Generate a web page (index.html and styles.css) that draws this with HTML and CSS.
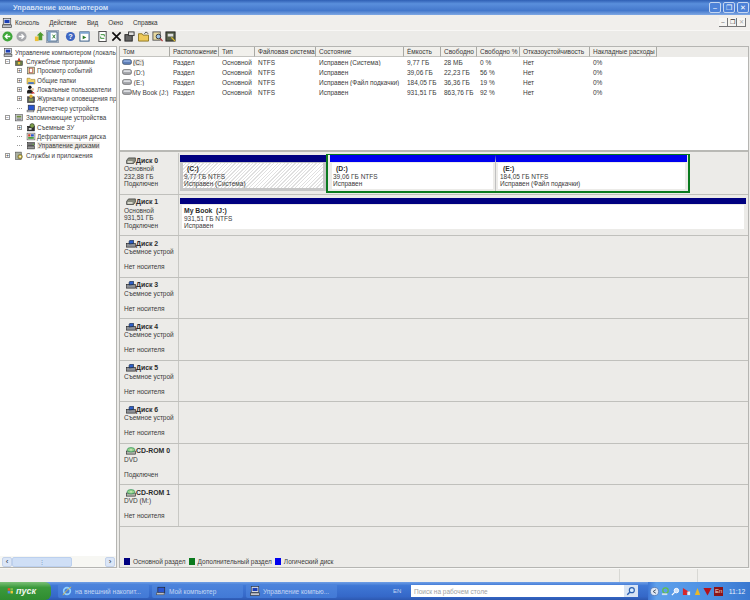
FILE: index.html
```html
<!DOCTYPE html>
<html lang="ru">
<head>
    <meta charset="UTF-8">
    <title>Управление компьютером</title>
    <link rel="stylesheet" href="styles.css">
</head>
<body>

<svg class="defs" width="0" height="0">
    <symbol id="i-pc" viewBox="0 0 16 16"><rect x="2" y="1" width="12" height="9" fill="#dfe3ea" stroke="#333"/><rect x="4" y="3" width="8" height="5" fill="#1c3fb5"/><rect x="1" y="11" width="14" height="4" fill="#c3c6cc" stroke="#333"/></symbol>
    <symbol id="i-tools" viewBox="0 0 16 16"><rect x="2" y="7" width="12" height="8" fill="#6a7a4a" stroke="#333"/><path d="M5 7 L8 1 L11 7z" fill="#c8372a"/><rect x="6" y="9" width="4" height="4" fill="#e8c23a"/></symbol>
    <symbol id="i-log" viewBox="0 0 16 16"><rect x="2" y="2" width="12" height="12" fill="#d9c78f" stroke="#444"/><rect x="5" y="4" width="6" height="8" fill="#fff" stroke="#a33"/></symbol>
    <symbol id="i-folder" viewBox="0 0 16 16"><path d="M1 4 H6 L8 6 H15 V14 H1z" fill="#f1d264" stroke="#9a7d20"/><rect x="3" y="11" width="10" height="3" fill="#3a6ecf"/></symbol>
    <symbol id="i-users" viewBox="0 0 16 16"><circle cx="6" cy="4" r="3" fill="#111"/><path d="M1 15 V10 Q6 6 11 10 V15z" fill="#222"/><circle cx="11" cy="8" r="2.5" fill="#e9c9a0"/><path d="M8 15 Q11 9 15 15z" fill="#c33"/></symbol>
    <symbol id="i-alert" viewBox="0 0 16 16"><rect x="2" y="5" width="12" height="10" fill="#555" stroke="#222"/><circle cx="8" cy="4" r="3" fill="#e0b030"/><rect x="4" y="8" width="8" height="5" fill="#8a9a5a"/></symbol>
    <symbol id="i-screen" viewBox="0 0 16 16"><rect x="3" y="2" width="11" height="9" fill="#2a55d0" stroke="#222"/><rect x="1" y="11" width="12" height="3" fill="#d5d8df" stroke="#555"/></symbol>
    <symbol id="i-store" viewBox="0 0 16 16"><rect x="2" y="3" width="12" height="11" fill="#c9cbd0" stroke="#444"/><rect x="4" y="5" width="8" height="3" fill="#6f8f3c"/><rect x="4" y="10" width="8" height="2" fill="#777"/></symbol>
    <symbol id="i-removable" viewBox="0 0 16 16"><rect x="2" y="6" width="12" height="8" fill="#333" stroke="#111"/><circle cx="10" cy="5" r="4" fill="#7ea04a" stroke="#222"/><rect x="4" y="9" width="5" height="3" fill="#ddd"/></symbol>
    <symbol id="i-defrag" viewBox="0 0 16 16"><rect x="1" y="2" width="14" height="12" fill="#e8e4d8" stroke="#555"/><rect x="3" y="4" width="4" height="4" fill="#d03a2a"/><rect x="8" y="4" width="5" height="4" fill="#2a55d0"/><rect x="3" y="9" width="10" height="3" fill="#3a9a3a"/></symbol>
    <symbol id="i-manage" viewBox="0 0 16 16"><rect x="2" y="3" width="12" height="5" fill="#777" stroke="#222"/><rect x="2" y="9" width="12" height="5" fill="#999" stroke="#222"/><circle cx="12" cy="6" r="1" fill="#6c3"/></symbol>
    <symbol id="i-services" viewBox="0 0 16 16"><rect x="2" y="2" width="10" height="13" fill="#aab0a0" stroke="#444"/><circle cx="10" cy="10" r="4" fill="#c9b23a" stroke="#554"/><circle cx="10" cy="10" r="1.5" fill="#fff"/></symbol>
    <symbol id="i-vol" viewBox="0 0 16 10"><rect x="0.5" y="1" width="15" height="8" rx="3" fill="#a6a8ad" stroke="#555"/><rect x="2" y="2" width="12" height="3" rx="1.5" fill="#dcdee2"/></symbol>
    <symbol id="i-vol-sel" viewBox="0 0 16 10"><rect x="0.5" y="1" width="15" height="8" rx="3" fill="#5f7fb8" stroke="#345"/><rect x="2" y="2" width="12" height="3" rx="1.5" fill="#8ba8da"/></symbol>
    <symbol id="i-disk" viewBox="0 0 16 12"><path d="M4 1 H15 V6 L12 10 H1 V5z" fill="#8a8d80" stroke="#222"/><rect x="2.5" y="6" width="8" height="3" fill="#d8d8cc"/></symbol>
    <symbol id="i-usb" viewBox="0 0 16 12"><rect x="1" y="5" width="14" height="6" fill="#8d9096" stroke="#222"/><path d="M5 6 V2 Q5 0 8 0 H12 V5z" fill="#2f5fc8" stroke="#123"/></symbol>
    <symbol id="i-cd" viewBox="0 0 16 12"><rect x="1" y="6" width="14" height="5" fill="#b0b3aa" stroke="#222"/><ellipse cx="8" cy="4" rx="6" ry="3.5" fill="#9ad38c" stroke="#285"/><circle cx="8" cy="4" r="1" fill="#fff"/></symbol>
</svg>

<header class="titlebar">
    <span class="title">Управление компьютером</span>
    <div class="window-buttons">
        <span class="win-btn">&#8211;</span>
        <span class="win-btn">&#10064;</span>
        <span class="win-btn win-close">&#10005;</span>
    </div>
</header>

<nav class="menubar">
    <svg class="menu-icon"><use href="#i-pc"/></svg>
    <span>Консоль</span>
    <span>Действие</span>
    <span>Вид</span>
    <span>Окно</span>
    <span>Справка</span>
    <div class="child-buttons">
        <span class="child-btn">&#8211;</span>
        <span class="child-btn">&#10064;</span>
        <span class="child-btn child-off">&#10005;</span>
    </div>
</nav>

<div class="toolbar">
    <svg class="tool" viewBox="0 0 12 12"><circle cx="6" cy="6" r="5.5" fill="#3fa63a"/><path d="M9 6 H4 M6 3.5 L3.5 6 L6 8.5" stroke="#fff" stroke-width="1.4" fill="none"/></svg>
    <svg class="tool" viewBox="0 0 12 12"><circle cx="6" cy="6" r="5.5" fill="#a6a8ac"/><path d="M3 6 H8 M6 3.5 L8.5 6 L6 8.5" stroke="#fff" stroke-width="1.4" fill="none"/></svg>
    <i class="tool-sep"></i>
    <svg class="tool" viewBox="0 0 12 12"><path d="M1 6 H5 V11 H1z" fill="#eebf3a"/><path d="M7 1 L11 5 H9 V10 H5 V5 H3z" fill="#4e9a2e"/></svg>
    <svg class="tool tool-on" viewBox="0 0 12 12"><rect x="1" y="1" width="10" height="10" fill="#fff" stroke="#28507e"/><rect x="1" y="1" width="3" height="10" fill="#7ea5d0"/><path d="M6 4 L9 8 M9 4 L6 8" stroke="#2a7a2a"/></svg>
    <i class="tool-sep"></i>
    <svg class="tool" viewBox="0 0 12 12"><circle cx="6" cy="6" r="5" fill="#3d66c2"/><text x="6" y="9" font-size="8" font-family="Liberation Sans" font-weight="700" fill="#fff" text-anchor="middle">?</text></svg>
    <svg class="tool" viewBox="0 0 12 12"><rect x="1" y="1" width="10" height="10" fill="#fff" stroke="#28507e"/><rect x="1" y="1" width="10" height="2" fill="#7ea5d0"/><path d="M4 5 L8 7 L4 9z" fill="#2a7a2a"/></svg>
    <i class="tool-sep"></i>
    <svg class="tool" viewBox="0 0 12 12"><rect x="2" y="0.5" width="8" height="11" fill="#fff" stroke="#444"/><path d="M4 4 H8 V6 M8 8 H4 V6" stroke="#2a8a2a" fill="none"/></svg>
    <svg class="tool" viewBox="0 0 12 12"><path d="M1.5 1.5 L10.5 10.5 M10.5 1.5 L1.5 10.5" stroke="#111" stroke-width="1.8"/></svg>
    <svg class="tool" viewBox="0 0 12 12"><rect x="1" y="4" width="8" height="7" fill="#666" stroke="#222"/><rect x="5" y="1" width="6" height="4" fill="#ddd" stroke="#333"/></svg>
    <svg class="tool" viewBox="0 0 12 12"><path d="M0.5 3 H4.5 L5.5 4.5 H11.5 V11 H0.5z" fill="#eec95a" stroke="#8a7320"/><path d="M7 3 L9 1 L11 3" stroke="#333" fill="none"/></svg>
    <svg class="tool" viewBox="0 0 12 12"><rect x="1" y="1" width="8" height="9" fill="#e7d9a0" stroke="#555"/><circle cx="7" cy="6" r="2.5" fill="#9cc4e8" stroke="#333"/><path d="M9 8 L11.5 11" stroke="#a33" stroke-width="1.4"/></svg>
    <svg class="tool" viewBox="0 0 12 12"><rect x="1" y="1" width="10" height="10" fill="#56604a" stroke="#222"/><rect x="3" y="3" width="6" height="3" fill="#ddd"/><path d="M7 7 L11 11" stroke="#e0c030" stroke-width="1.4"/></svg>
</div>

<main class="workspace">
    <aside class="tree-pane">
        <ul class="tree">
            <li class="lv0"><svg class="ico"><use href="#i-pc"/></svg>Управление компьютером (локаль</li>
            <li class="lv1"><b class="box">&minus;</b><svg class="ico"><use href="#i-tools"/></svg>Служебные программы</li>
            <li class="lv2"><b class="box">+</b><svg class="ico"><use href="#i-log"/></svg>Просмотр событий</li>
            <li class="lv2"><b class="box">+</b><svg class="ico"><use href="#i-folder"/></svg>Общие папки</li>
            <li class="lv2"><b class="box">+</b><svg class="ico"><use href="#i-users"/></svg>Локальные пользователи</li>
            <li class="lv2"><b class="box">+</b><svg class="ico"><use href="#i-alert"/></svg>Журналы и оповещения пр</li>
            <li class="lv2"><b class="box box-none"></b><svg class="ico"><use href="#i-screen"/></svg>Диспетчер устройств</li>
            <li class="lv1"><b class="box">&minus;</b><svg class="ico"><use href="#i-store"/></svg>Запоминающие устройства</li>
            <li class="lv2"><b class="box">+</b><svg class="ico"><use href="#i-removable"/></svg>Съемные ЗУ</li>
            <li class="lv2"><b class="box box-none"></b><svg class="ico"><use href="#i-defrag"/></svg>Дефрагментация диска</li>
            <li class="lv2"><b class="box box-none"></b><svg class="ico"><use href="#i-manage"/></svg><span class="selected">Управление дисками</span></li>
            <li class="lv1"><b class="box">+</b><svg class="ico"><use href="#i-services"/></svg>Службы и приложения</li>
        </ul>
        <div class="hscroll">
            <span class="scroll-btn">&#8249;</span>
            <span class="scroll-thumb">&#8942;</span>
            <span class="scroll-fill"></span>
            <span class="scroll-btn">&#8250;</span>
        </div>
    </aside>

    <section class="detail-pane">
        <div class="volume-list">
            <div class="vrow vhead">
                <span>Том</span><span>Расположение</span><span>Тип</span><span>Файловая система</span><span>Состояние</span><span>Ёмкость</span><span>Свободно</span><span>Свободно %</span><span>Отказоустойчивость</span><span>Накладные расходы</span>
            </div>
            <div class="vrow">
                <span><svg class="vol"><use href="#i-vol-sel"/></svg><em class="vol-name">(C:)</em></span><span>Раздел</span><span>Основной</span><span>NTFS</span><span>Исправен (Система)</span><span>9,77 ГБ</span><span>28 МБ</span><span>0 %</span><span>Нет</span><span>0%</span>
            </div>
            <div class="vrow">
                <span><svg class="vol"><use href="#i-vol"/></svg>&nbsp;(D:)</span><span>Раздел</span><span>Основной</span><span>NTFS</span><span>Исправен</span><span>39,06 ГБ</span><span>22,23 ГБ</span><span>56 %</span><span>Нет</span><span>0%</span>
            </div>
            <div class="vrow">
                <span><svg class="vol"><use href="#i-vol"/></svg>&nbsp;(E:)</span><span>Раздел</span><span>Основной</span><span>NTFS</span><span>Исправен (Файл подкачки)</span><span>184,05 ГБ</span><span>36,36 ГБ</span><span>19 %</span><span>Нет</span><span>0%</span>
            </div>
            <div class="vrow">
                <span><svg class="vol"><use href="#i-vol"/></svg>My Book (J:)</span><span>Раздел</span><span>Основной</span><span>NTFS</span><span>Исправен</span><span>931,51 ГБ</span><span>863,76 ГБ</span><span>92 %</span><span>Нет</span><span>0%</span>
            </div>
        </div>

        <div class="disk-view">
            <div class="disk">
                <div class="disk-label">
                    <strong><svg class="dico"><use href="#i-disk"/></svg>Диск 0</strong>
                    <span>Основной</span><span>232,88 ГБ</span><span>Подключен</span>
                </div>
                <div class="disk-map map-0">
                    <div class="part part-primary part-system">
                        <div class="part-body"><strong>(C:)</strong><span>9,77 ГБ NTFS</span><span>Исправен (Система)</span></div>
                    </div>
                    <div class="extended">
                        <div class="part part-logical part-d">
                            <div class="part-body"><strong>(D:)</strong><span>39,06 ГБ NTFS</span><span>Исправен</span></div>
                        </div>
                        <div class="part part-logical part-e">
                            <div class="part-body"><strong>(E:)</strong><span>184,05 ГБ NTFS</span><span>Исправен (Файл подкачки)</span></div>
                        </div>
                    </div>
                </div>
            </div>
            <div class="disk">
                <div class="disk-label">
                    <strong><svg class="dico"><use href="#i-disk"/></svg>Диск 1</strong>
                    <span>Основной</span><span>931,51 ГБ</span><span>Подключен</span>
                </div>
                <div class="disk-map map-1">
                    <div class="part part-primary part-full">
                        <div class="part-body"><strong>My Book&nbsp; (J:)</strong><span>931,51 ГБ NTFS</span><span>Исправен</span></div>
                    </div>
                </div>
            </div>
            <div class="disk"><div class="disk-label"><strong><svg class="dico"><use href="#i-usb"/></svg>Диск 2</strong><span>Съемное устрой</span><span>&nbsp;</span><span>Нет носителя</span></div><div class="disk-map"></div></div>
            <div class="disk"><div class="disk-label"><strong><svg class="dico"><use href="#i-usb"/></svg>Диск 3</strong><span>Съемное устрой</span><span>&nbsp;</span><span>Нет носителя</span></div><div class="disk-map"></div></div>
            <div class="disk"><div class="disk-label"><strong><svg class="dico"><use href="#i-usb"/></svg>Диск 4</strong><span>Съемное устрой</span><span>&nbsp;</span><span>Нет носителя</span></div><div class="disk-map"></div></div>
            <div class="disk"><div class="disk-label"><strong><svg class="dico"><use href="#i-usb"/></svg>Диск 5</strong><span>Съемное устрой</span><span>&nbsp;</span><span>Нет носителя</span></div><div class="disk-map"></div></div>
            <div class="disk"><div class="disk-label"><strong><svg class="dico"><use href="#i-usb"/></svg>Диск 6</strong><span>Съемное устрой</span><span>&nbsp;</span><span>Нет носителя</span></div><div class="disk-map"></div></div>
            <div class="disk"><div class="disk-label"><strong><svg class="dico"><use href="#i-cd"/></svg>CD-ROM 0</strong><span>DVD</span><span>&nbsp;</span><span>Подключен</span></div><div class="disk-map"></div></div>
            <div class="disk"><div class="disk-label"><strong><svg class="dico"><use href="#i-cd"/></svg>CD-ROM 1</strong><span>DVD (M:)</span><span>&nbsp;</span><span>Нет носителя</span></div><div class="disk-map"></div></div>
        </div>

        <div class="legend">
            <i class="swatch sw-primary"></i><span>Основной раздел</span>
            <i class="swatch sw-extended"></i><span>Дополнительный раздел</span>
            <i class="swatch sw-logical"></i><span>Логический диск</span>
        </div>
    </section>
</main>

<div class="statusbar">
    <span class="status-main"></span>
    <span class="status-mid"></span>
    <span class="status-end"></span>
</div>

<footer class="taskbar">
    <div class="start"><svg class="flag" viewBox="0 0 10 10"><rect x="1" y="1" width="3.5" height="3.5" fill="#e8562a"/><rect x="5" y="1" width="3.5" height="3.5" fill="#7fc04a"/><rect x="1" y="5" width="3.5" height="3.5" fill="#4a90e0"/><rect x="5" y="5" width="3.5" height="3.5" fill="#f2c83a"/></svg>пуск</div>
    <div class="task"><svg class="task-ico" viewBox="0 0 12 12"><circle cx="6" cy="6" r="4" fill="none" stroke="#8fd0ff" stroke-width="2"/><path d="M1 11 Q5 5 11 1" stroke="#e8c23a" fill="none"/></svg>на внешний накопит...</div>
    <div class="task"><svg class="task-ico"><use href="#i-screen"/></svg>Мой компьютер</div>
    <div class="task"><svg class="task-ico"><use href="#i-pc"/></svg>Управление компью...</div>
    <span class="lang">EN</span>
    <div class="search">
        <span>Поиск на рабочем столе</span>
        <svg class="search-ico" viewBox="0 0 12 12"><circle cx="7" cy="5" r="3" fill="#d8ecff" stroke="#2a5fb0" stroke-width="1.4"/><path d="M4.5 7.5 L1.5 10.5" stroke="#2a5fb0" stroke-width="1.8"/></svg>
    </div>
    <div class="tray">
        <svg class="tray-ico" viewBox="0 0 10 10"><circle cx="5" cy="5" r="4.5" fill="#dfe8f5" stroke="#5a7fb8"/><path d="M6.5 3 L3.5 5 L6.5 7" stroke="#345" fill="none"/></svg>
        <svg class="tray-ico" viewBox="0 0 10 10"><circle cx="5" cy="4" r="3" fill="none" stroke="#5fc04a" stroke-width="1.4"/><rect x="1" y="7" width="6" height="2" fill="#cde"/></svg>
        <svg class="tray-ico" viewBox="0 0 10 10"><circle cx="6" cy="4" r="2.5" fill="#cfe2f8" stroke="#fff"/><path d="M4 6 L1 9" stroke="#fff" stroke-width="1.4"/></svg>
        <svg class="tray-ico" viewBox="0 0 10 10"><path d="M1 1 L9 6 L5 6 L6 9 L1 9z" fill="#d8262a"/><rect x="6" y="5" width="3" height="4" fill="#eee"/></svg>
        <svg class="tray-ico" viewBox="0 0 10 10"><path d="M5 1 L8 9 H2z" fill="#e8b82a"/></svg>
        <svg class="tray-ico" viewBox="0 0 10 10"><path d="M0.5 1 H9.5 L5 9.5z" fill="#b5121b"/></svg>
        <span class="tray-en">En</span>
        <span class="clock">11:12</span>
    </div>
</footer>

</body>
</html>
```

FILE: styles.css
```css
* {
    box-sizing: border-box;
}

html, body {
    margin: 0;
    padding: 0;
    height: 600px;
    overflow: hidden;
}

body {
    width: 750px;
    display: flex;
    flex-direction: column;
    background-color: #ecebe8;
    font-family: "Liberation Sans", Arial, sans-serif;
    font-size: 6.5px;
    color: #3a3a3a;
}

.defs {
    position: absolute;
}

/* Заголовок окна */
.titlebar {
    height: 15px;
    flex: none;
    display: flex;
    align-items: center;
    justify-content: space-between;
    padding: 0 1px 0 13px;
    background: linear-gradient(#2f5fb4, #5a8fdc 25%, #4478cc 70%, #7fa8e4);
    color: #d3e0f6;
}

.title {
    font-size: 7.3px;
    font-weight: 700;
}

.window-buttons {
    display: flex;
    gap: 2px;
}

.win-btn {
    width: 12px;
    height: 11px;
    display: flex;
    align-items: center;
    justify-content: center;
    border: 1px solid #c5d6f0;
    border-radius: 2px;
    background-color: #4d82d8;
    color: #fff;
    font-size: 7px;
}

.menubar {
    height: 15px;
    flex: none;
    display: flex;
    align-items: center;
    gap: 10px;
    padding: 0 4px 0 2px;
    background-color: #f1efec;
    color: #333;
    font-size: 6.3px;
}

.menu-icon {
    width: 10px;
    height: 10px;
    margin-right: -7px;
}

.child-buttons {
    margin-left: auto;
    display: flex;
    gap: 0;
}

.child-btn {
    width: 9px;
    height: 9px;
    display: flex;
    align-items: center;
    justify-content: center;
    background-color: #f6f5f2;
    border-right: 1px solid #777;
    border-bottom: 1px solid #777;
    font-size: 6px;
    line-height: 1;
}

.child-off {
    color: #aaa;
}

.toolbar {
    height: 14px;
    flex: none;
    display: flex;
    align-items: center;
    gap: 2.7px;
    padding: 0 0 2px 2px;
    border-top: 1px solid #f8f7f5;
    background-color: #ecebe8;
}

.tool {
    width: 11px;
    height: 11px;
    flex: none;
}

.tool-on {
    background-color: #dcdcd6;
    outline: 1px solid #9aa6b8;
}

.tool-sep {
    width: 1.6px;
    flex: none;
}

/* Дерево */
.workspace {
    height: 524px;
    flex: none;
    display: flex;
    gap: 2px;
    padding: 2px 1px 0 0;
    background-color: #ecebe8;
}

.tree-pane {
    width: 117px;
    flex: none;
    display: flex;
    flex-direction: column;
    background-color: #fff;
    border: 1px solid #b5b5b2;
    border-left: none;
    overflow: hidden;
}

.tree {
    flex: 1;
    list-style: none;
    margin: 0;
    padding: 0.5px 0 0 3px;
    font-size: 6.3px;
    white-space: nowrap;
    overflow: hidden;
}

.tree li {
    height: 9.36px;
    display: flex;
    align-items: center;
    color: #3c3c3c;
}

.lv1 {
    padding-left: 2px;
}

.lv2 {
    padding-left: 14px;
}

.box {
    width: 5px;
    height: 5px;
    flex: none;
    display: flex;
    align-items: center;
    justify-content: center;
    margin-right: 4px;
    border: 1px solid #9a9a9a;
    font-size: 5px;
    font-weight: 400;
    line-height: 1;
    color: #333;
}

.box-none {
    border: none;
    border-bottom: 1px dotted #999;
    height: 3px;
    margin-bottom: 2px;
}

.ico {
    width: 10px;
    height: 9px;
    flex: none;
    margin-right: 2px;
}

.lv2 .ico {
    margin-right: 1px;
}

.selected {
    padding: 0 1px;
    background-color: #ece9e4;
}

.hscroll {
    height: 11px;
    flex: none;
    display: flex;
    align-items: center;
    padding: 0 1px 0 2px;
    background-color: #f7f7f3;
}

.scroll-btn {
    width: 10px;
    height: 10px;
    display: flex;
    align-items: center;
    justify-content: center;
    border: 1px solid #c3d2ea;
    border-radius: 2px;
    background-color: #dbe6f7;
    color: #234;
    font-size: 8px;
}

.scroll-thumb {
    width: 60px;
    height: 10px;
    display: flex;
    align-items: center;
    justify-content: center;
    border: 1px solid #bcd0ee;
    border-radius: 2px;
    background-color: #cfdff6;
    color: #7a93bb;
    font-size: 6px;
}

.scroll-fill {
    flex: 1;
}

/* Правая панель */
.detail-pane {
    flex: 1;
    min-width: 0;
    display: flex;
    flex-direction: column;
    border: 1px solid #b5b5b2;
    background-color: #ecebe8;
}

.volume-list {
    height: 105px;
    flex: none;
    background-color: #fff;
    border-bottom: 2px solid #b9b9b5;
}

.vrow {
    display: grid;
    grid-template-columns: 50px 49px 36px 61px 88px 37px 36px 43px 70px 67px;
    height: 10px;
    align-items: center;
    white-space: nowrap;
}

.vrow span {
    padding-left: 3px;
    overflow: hidden;
}

.vhead {
    height: 10px;
    background-color: #ecebe8;
}

.vhead span {
    height: 10px;
    line-height: 10px;
    padding-left: 3px;
    border-right: 1px solid #a9a9a4;
    border-bottom: 1px solid #c4c4c0;
    background-color: #f1f0ec;
}

.vol {
    width: 10px;
    height: 6px;
    margin-left: -1px;
    vertical-align: -0.5px;
}

.vol-name {
    font-style: normal;
    margin-left: 1px;
    background-color: #ece9e4;
}

/* Диски */
.disk-view {
    height: 394px;
    flex: none;
    padding-top: 1px;
}

.disk {
    height: 41.5px;
    display: flex;
    border-bottom: 1px solid #c0c0bc;
}

.disk-label {
    width: 59px;
    flex: none;
    display: flex;
    flex-direction: column;
    padding: 3px 0 0 4px;
    border-right: 1px solid #c8c8c4;
    line-height: 7.6px;
    white-space: nowrap;
    overflow: hidden;
}

.disk-label strong {
    display: flex;
    align-items: center;
    height: 9px;
    padding-left: 2px;
    color: #2b2b2b;
    font-size: 6.9px;
}

.dico {
    width: 10px;
    height: 8px;
    flex: none;
}

.disk-map {
    flex: 1;
    min-width: 0;
    display: flex;
    padding: 2px 2px 0 1px;
}

.map-1 {
    padding-top: 3.5px;
}

.part {
    display: flex;
    flex-direction: column;
    min-width: 0;
    height: 36px;
}

.part-primary {
    border-top: 7px solid #000080;
}

.map-1 .part-primary {
    height: 33px;
    border-top-width: 6px;
}

.part-logical {
    border-top: 7px solid #0000ee;
}

.part-system {
    width: 146px;
    flex: none;
}

.part-full {
    flex: 1;
}

.part-d {
    width: 166px;
    flex: none;
    border-right: 1px solid #c0c0c0;
}

.part-e {
    flex: 1;
}

.part-body {
    flex: 1;
    display: flex;
    flex-direction: column;
    padding: 2px 2px 0 2px;
    border: 2px solid #ecebe8;
    border-top-width: 1px;
    background-color: #fff;
    line-height: 7.6px;
    white-space: nowrap;
    overflow: hidden;
}

.part-body strong {
    padding-left: 3px;
    color: #2b2b2b;
    font-size: 6.8px;
}

.part-full .part-body strong {
    padding-left: 0;
}

.part-d .part-body {
    padding-left: 1px;
}

.part-system .part-body {
    border: 3px solid #c6c6c6;
    border-top-width: 1px;
    padding-left: 1px;
    background: repeating-linear-gradient(135deg, #fff 0 1.5px, #e0e0e0 1.5px 2.5px);
}

.extended {
    width: 364px;
    height: 39px;
    flex: none;
    display: flex;
    margin-top: -1px;
    padding: 0 1px 0 2px;
    border: 1px solid #0a7a1e;
    border-width: 1px 2px 2px 2px;
}

/* Легенда и статус */
.legend {
    flex: 1;
    display: flex;
    align-items: flex-end;
    padding: 0 0 2px 4px;
    color: #3c3c3c;
}

.legend span {
    margin-right: 3px;
}

.swatch {
    width: 6px;
    height: 7px;
    margin-right: 3px;
}

.sw-primary {
    background-color: #000080;
}

.sw-extended {
    background-color: #0a7a1e;
}

.sw-logical {
    background-color: #0000ee;
}

.statusbar {
    height: 14px;
    flex: none;
    display: flex;
    background-color: #f0efec;
    border-top: 1px solid #f8f8f6;
}

.status-main {
    width: 620px;
    border-right: 1px solid #d8d8d4;
}

.status-mid {
    width: 78px;
    border-right: 1px solid #d8d8d4;
}

/* Панель задач */
.taskbar {
    height: 18px;
    flex: none;
    display: flex;
    align-items: center;
    background: linear-gradient(#6f9fe6, #3f78d6 20%, #3568c8 80%, #2d58b0);
    color: #c4d6f4;
}

.start {
    width: 51px;
    height: 18px;
    flex: none;
    display: flex;
    align-items: center;
    gap: 2px;
    padding-left: 7px;
    border-radius: 0 6px 6px 0;
    background: linear-gradient(#7cc078, #3c9a3c 30%, #2f8c30);
    color: #f0f6ee;
    font-size: 9px;
    font-style: italic;
    font-weight: 700;
}

.flag {
    width: 7px;
    height: 8px;
}

.task {
    width: 91px;
    height: 14px;
    flex: none;
    display: flex;
    align-items: center;
    gap: 3px;
    margin-left: 3px;
    padding-left: 4px;
    border-radius: 2px;
    background: linear-gradient(#4d84dc, #4279d6);
    white-space: nowrap;
}

.start + .task {
    margin-left: 7px;
}

.task-ico {
    width: 10px;
    height: 10px;
    flex: none;
}

.lang {
    width: 18px;
    flex: none;
    margin-left: 56px;
    font-size: 6px;
}

.search {
    width: 227px;
    height: 12px;
    flex: none;
    display: flex;
    align-items: center;
    justify-content: space-between;
    padding-left: 3px;
    background-color: #fff;
    color: #a0a0a0;
}

.search-ico {
    width: 14px;
    height: 12px;
    padding: 1px 2px;
    background-color: #d9e4f4;
}

.tray {
    flex: 1;
    height: 18px;
    display: flex;
    align-items: center;
    gap: 1.7px;
    margin-left: 10px;
    padding-left: 2px;
    background: linear-gradient(90deg, #3f78d6, #5ea0ea 8%, #4c90e4 60%, #3a78d0);
}

.tray-ico {
    width: 9px;
    height: 9px;
    flex: none;
}

.tray-en {
    width: 9px;
    height: 9px;
    flex: none;
    display: flex;
    align-items: center;
    justify-content: center;
    background-color: #8c1418;
    color: #e8d8d0;
    font-size: 6px;
}

.clock {
    margin-left: 4px;
    color: #e8f0fb;
    font-size: 6.8px;
}
```
